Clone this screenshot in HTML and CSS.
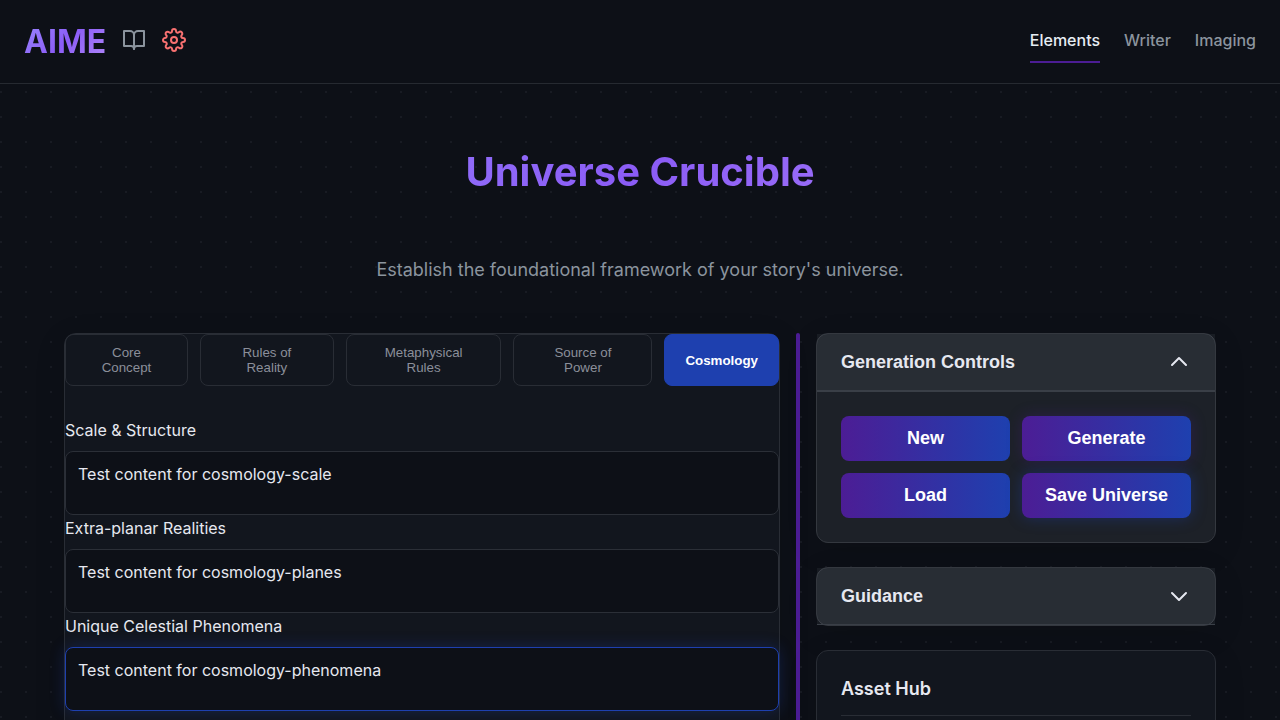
FILE: index.html
```html
<!DOCTYPE html>
<html lang="en">
<head>
<meta charset="utf-8">
<meta name="viewport" content="width=device-width, initial-scale=1">
<title>AIME - Universe Crucible</title>
<link rel="stylesheet" href="styles.css">
</head>
<body>
<header class="topbar">
  <div class="brand">
    <span class="logo">AIME</span>
    <button class="icon-btn" type="button" aria-label="Library">
      <svg class="icon" viewBox="0 0 24 24"><path d="M2 3h6a4 4 0 0 1 4 4v14a3 3 0 0 0-3-3H2z"/><path d="M22 3h-6a4 4 0 0 0-4 4v14a3 3 0 0 1 3-3h7z"/></svg>
    </button>
    <button class="icon-btn icon-btn-alert" type="button" aria-label="Settings">
      <svg class="icon" viewBox="0 0 24 24"><circle cx="12" cy="12" r="3"/><path d="M19.4 15a1.65 1.65 0 0 0 .33 1.82l.06.06a2 2 0 0 1 0 2.83 2 2 0 0 1-2.83 0l-.06-.06a1.65 1.65 0 0 0-1.82-.33 1.65 1.65 0 0 0-1 1.51V21a2 2 0 0 1-2 2 2 2 0 0 1-2-2v-.09A1.65 1.65 0 0 0 9 19.4a1.65 1.65 0 0 0-1.82.33l-.06.06a2 2 0 0 1-2.83 0 2 2 0 0 1 0-2.83l.06-.06a1.65 1.65 0 0 0 .33-1.82 1.65 1.65 0 0 0-1.51-1H3a2 2 0 0 1-2-2 2 2 0 0 1 2-2h.09A1.65 1.65 0 0 0 4.6 9a1.65 1.65 0 0 0-.33-1.82l-.06-.06a2 2 0 0 1 0-2.83 2 2 0 0 1 2.83 0l.06.06a1.65 1.65 0 0 0 1.82.33H9a1.65 1.65 0 0 0 1-1.51V3a2 2 0 0 1 2-2 2 2 0 0 1 2 2v.09a1.65 1.65 0 0 0 1 1.51 1.65 1.65 0 0 0 1.82-.33l.06-.06a2 2 0 0 1 2.83 0 2 2 0 0 1 0 2.83l-.06.06a1.65 1.65 0 0 0-.33 1.82V9a1.65 1.65 0 0 0 1.51 1H21a2 2 0 0 1 2 2 2 2 0 0 1-2 2h-.09a1.65 1.65 0 0 0-1.51 1z"/></svg>
    </button>
  </div>
  <nav class="nav">
    <a class="nav-link nav-link-active" href="#elements">Elements</a>
    <a class="nav-link" href="#writer">Writer</a>
    <a class="nav-link" href="#imaging">Imaging</a>
  </nav>
</header>
<main class="page">
  <h1 class="title">Universe Crucible</h1>
  <p class="subtitle">Establish the foundational framework of your story's universe.</p>
  <div class="workspace">
    <section class="panel">
      <div class="tabs">
        <button class="tab" type="button">Core Concept</button>
        <button class="tab" type="button">Rules of Reality</button>
        <button class="tab" type="button">Metaphysical Rules</button>
        <button class="tab" type="button">Source of Power</button>
        <button class="tab tab-active" type="button">Cosmology</button>
      </div>
      <label class="field-label" for="scale">Scale &amp; Structure</label>
      <textarea class="field" id="scale" rows="2">Test content for cosmology-scale</textarea>
      <label class="field-label" for="planes">Extra-planar Realities</label>
      <textarea class="field" id="planes" rows="2">Test content for cosmology-planes</textarea>
      <label class="field-label" for="phenomena">Unique Celestial Phenomena</label>
      <textarea class="field field-current" id="phenomena" rows="2">Test content for cosmology-phenomena</textarea>
    </section>
    <div class="divider"></div>
    <aside class="sidebar">
      <section class="card">
        <button class="card-head" type="button" aria-expanded="true">Generation Controls
          <svg class="icon icon-up" viewBox="0 0 24 24"><path d="M19 9l-7 7-7-7"/></svg>
        </button>
        <div class="actions">
          <button class="action" type="button">New</button>
          <button class="action glow-purple" type="button">Generate</button>
          <button class="action" type="button">Load</button>
          <button class="action glow-blue" type="button">Save Universe</button>
        </div>
      </section>
      <section class="card">
        <button class="card-head" type="button" aria-expanded="false">Guidance
          <svg class="icon" viewBox="0 0 24 24"><path d="M19 9l-7 7-7-7"/></svg>
        </button>
      </section>
      <section class="panel hub">
        <h2 class="hub-title">Asset Hub</h2>
      </section>
    </aside>
  </div>
</main>
</body>
</html>
```
FILE: styles.css
```css
* {
  box-sizing: border-box;
}

html {
  scrollbar-width: none;
}

body {
  margin: 0;
  min-height: 100vh;
  background-color: #0d1017;
  background-image: radial-gradient(circle at 1px 1px, #181b23 1px, transparent 0);
  background-size: 25px 25px;
  background-position: 0 16px;
  color: #e6e8f0;
  font: 16px/26px Inter, sans-serif;
}

button {
  font-family: "Liberation Sans", Arial, sans-serif;
  cursor: pointer;
}

.topbar {
  display: flex;
  align-items: center;
  justify-content: space-between;
  padding: 16px 24px;
  background: #0d1017;
  border-bottom: 1px solid #262a31;
}

.brand {
  display: flex;
  align-items: center;
  gap: 16px;
}

.logo,
.title {
  font-weight: 700;
  background: linear-gradient(135deg, #9a8cff, #8b5cf6 50%, #b48cfa);
  background-clip: text;
  color: transparent;
}

.logo {
  font-size: 32px;
  line-height: 51px;
}

.icon-btn {
  display: flex;
  padding: 0 0 4px;
  border: 0;
  background: none;
  color: #8b949e;
}

.icon-btn-alert {
  color: #f87171;
}

.icon {
  width: 24px;
  height: 24px;
  fill: none;
  stroke: currentColor;
  stroke-width: 2;
  stroke-linecap: round;
  stroke-linejoin: round;
}

.icon-up {
  transform: rotate(180deg);
}

.nav {
  display: flex;
  gap: 24px;
}

.nav-link {
  padding: 6px 0 8px;
  border-bottom: 2px solid transparent;
  color: #8b949e;
  font-weight: 500;
  text-decoration: none;
}

.nav-link-active {
  color: #e6edf3;
  border-color: #4c1d95;
}

.page {
  padding: 56px 64px 48px;
}

.title {
  margin: 0 0 52px;
  font-size: 40px;
  line-height: 64px;
  text-align: center;
}

.subtitle {
  margin: 0 0 49px;
  color: #8b949e;
  font-size: 18px;
  line-height: 28px;
  text-align: center;
}

.workspace {
  display: grid;
  grid-template-columns: minmax(0, 1fr) 4px 400px;
  gap: 16px;
}

.panel {
  border: 1px solid #292d35;
  border-radius: 12px;
  background: #12161e;
  box-shadow: 0 8px 32px rgba(0, 0, 0, 0.1);
}

.tabs {
  display: flex;
  gap: 12px;
  margin-bottom: 31px;
}

.tab {
  padding: 10px 20px;
  border: 1px solid #292d35;
  border-radius: 8px;
  background: transparent;
  color: #8b8f9a;
}

.tab-active {
  border-color: #1e40af;
  background: #1e40af;
  color: #ffffff;
  font-weight: 700;
}

.field-label {
  display: block;
  margin-bottom: 8px;
}

.field {
  display: block;
  width: 100%;
  height: 64px;
  padding: 12px;
  border: 1px solid #2b2f37;
  border-radius: 8px;
  background: #0d1017;
  color: inherit;
  font: 16px/20px Inter, sans-serif;
  resize: none;
  outline: none;
  scrollbar-width: none;
}

.field-current {
  border-color: #1e40af;
  box-shadow: 0 0 15px rgba(30, 64, 175, 0.3);
}

.divider {
  border-radius: 2px;
  background: #4c1d95;
}

.sidebar {
  display: flex;
  flex-direction: column;
  gap: 24px;
}

.card {
  border: 1px solid #34383f;
  border-radius: 12px;
  background: #1d2128;
  box-shadow: 0 8px 32px rgba(0, 0, 0, 0.1);
}

.card-head {
  display: flex;
  align-items: center;
  justify-content: space-between;
  width: 100%;
  padding: 16px 24px;
  border: 0;
  border-bottom: 1px solid #3a3f47;
  background: rgba(225, 230, 255, 0.06);
  color: #e6e8f0;
  font-size: 18px;
  font-weight: 700;
  line-height: 24px;
}

.actions {
  display: grid;
  grid-template-columns: 1fr 1fr;
  gap: 12px;
  padding: 24px;
  border-top: 1px solid #3a3f47;
}

.action {
  padding: 12px;
  border: 0;
  border-radius: 8px;
  background: linear-gradient(90deg, #4c1d95, #1e40af);
  color: #ffffff;
  font-size: 18px;
  font-weight: 700;
  line-height: 21px;
}

.glow-purple {
  box-shadow: 0 0 15px rgba(76, 29, 149, 0.3);
}

.glow-blue {
  box-shadow: 0 0 15px rgba(30, 64, 175, 0.4);
}

.hub {
  padding: 24px;
}

.hub-title {
  margin: 0;
  padding-bottom: 12px;
  border-bottom: 1px solid #292d35;
  font-size: 18px;
  font-weight: 600;
  line-height: 28px;
}
```
